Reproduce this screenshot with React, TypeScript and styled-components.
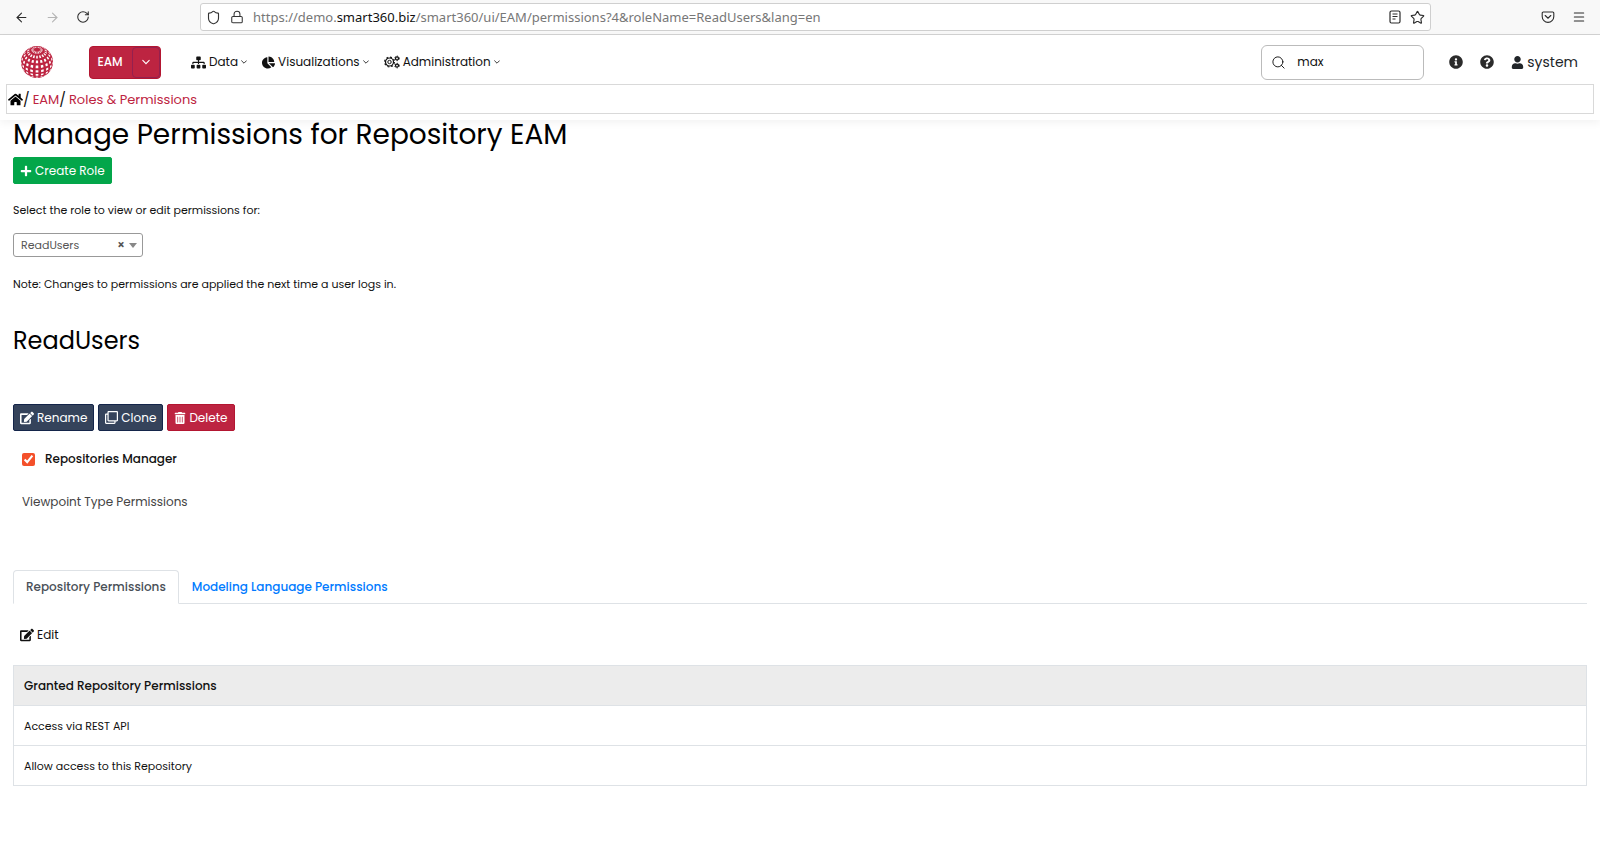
import React from "react";
import styled, { createGlobalStyle, css } from "styled-components";
import {
  FaSitemap,
  FaChartPie,
  FaHome,
  FaInfoCircle,
  FaQuestionCircle,
  FaUser,
  FaPlus,
  FaEdit,
  FaRegClone,
  FaTrashAlt,
} from "react-icons/fa";
import { ArrowLeft, ArrowRight, RotateCw, Shield, Lock, Star, Menu, Search } from "lucide-react";

const red = "#bd2441";
const navy = "#35435b";
const rule = "#dee2e6";

const GlobalStyle = createGlobalStyle`
  *, *::before, *::after { box-sizing: border-box; }
  body {
    margin: 0;
    background: #fff;
    color: #111;
    font-family: Poppins, Inter, "Open Sans", sans-serif;
    font-size: 12px;
    line-height: 20px;
  }
  button, input, select { font: inherit; color: inherit; }
  h1, h2, p { margin: 0; font-weight: 400; }
  svg { display: block; flex: none; }
`;

/* Browser toolbar */

const BrowserBar = styled.div`
  display: flex;
  align-items: center;
  height: 35px;
  padding: 0 14px;
  background: #f8f8f8;
  border-bottom: 1px solid #d2d2d2;
`;

const BarSide = styled.div<{ $right?: boolean }>`
  display: flex;
  align-items: center;
  flex: none;
  gap: ${(p) => (p.$right ? 17 : 16)}px;
  width: ${(p) => (p.$right ? 155 : 186)}px;
  justify-content: ${(p) => (p.$right ? "flex-end" : "flex-start")};
`;

const IconButton = styled.button<{ $faded?: boolean }>`
  display: flex;
  padding: 0;
  border: 0;
  background: none;
  color: ${(p) => (p.$faded ? "#b5b5b5" : "#2b2b2b")};
`;

const AddressBox = styled.div`
  display: flex;
  align-items: center;
  flex: 1;
  min-width: 0;
  height: 28px;
  padding: 0 5px;
  gap: 9px;
  background: #fff;
  border: 1px solid #cfcfcf;
  border-radius: 3px;
  color: #333;
`;

const Address = styled.div`
  flex: 1;
  min-width: 0;
  overflow: hidden;
  white-space: nowrap;
  font-family: "Noto Sans", sans-serif;
  font-size: 13px;
  color: #777;
  outline: 0;
`;

const Host = styled.span`
  color: #111;
`;

/* Application header */

const Header = styled.header`
  padding: 0 6px 6px;
  box-shadow: 0 3px 8px rgba(0, 0, 0, 0.05);
`;

const NavBar = styled.div`
  display: flex;
  align-items: center;
  height: 49px;
  padding: 5px 16px 0 14px;
`;

const RepoButton = styled.div`
  display: flex;
  height: 33px;
  margin: 0 30px 0 35px;
  background: ${red};
  border: 1px solid #b31631;
  border-radius: 4px;
  color: #fff;
`;

const RepoName = styled.button`
  width: 42px;
  padding: 0 2px 0 0;
  border: 0;
  background: none;
  font-weight: 500;
`;

const RepoCaret = styled.button`
  display: flex;
  align-items: center;
  justify-content: center;
  width: 28px;
  padding: 0;
  border: 1px solid #95204f;
  border-radius: 4px;
  background: none;
`;

const NavItem = styled.button`
  display: flex;
  align-items: center;
  gap: 3px;
  margin-right: 15px;
  padding: 0;
  border: 0;
  background: none;
  white-space: nowrap;
`;

const SearchBox = styled.label`
  display: flex;
  align-items: center;
  gap: 11px;
  width: 163px;
  height: 35px;
  margin: 0 25px 0 auto;
  padding: 0 9px;
  border: 1px solid #bbb;
  border-radius: 6px;
`;

const SearchInput = styled.input`
  flex: 1;
  min-width: 0;
  padding: 0;
  border: 0;
  outline: 0;
  background: none;
`;

const UserTools = styled.div`
  display: flex;
  align-items: center;
  gap: 17px;
`;

const UserLink = styled.a`
  display: flex;
  align-items: center;
  gap: 3px;
  color: #212529;
  font-size: 14px;
  text-decoration: none;
`;

const Breadcrumb = styled.nav`
  display: flex;
  align-items: center;
  height: 30px;
  padding: 1px 1px 0;
  border: 1px solid #d9d9d9;
  font-size: 13px;
`;

const Crumb = styled.a`
  color: ${red};
  text-decoration: none;
`;

const Slash = styled.span`
  margin-right: 3px;
  font-size: 14px;
`;

const CrumbHome = styled.a`
  display: flex;
  color: #000;
`;

/* Page */

const Main = styled.main`
  padding: 0 13px;
`;

const Title = styled.h1`
  padding-bottom: 7px;
  font-size: 28px;
  line-height: 30px;
  color: #000;
`;

const RoleTitle = styled.h2`
  padding: 31px 0 47px;
  font-size: 24px;
  line-height: 32px;
  color: #000;
`;

const ButtonRow = styled.div`
  display: flex;
  gap: 4px;
`;

const tones = { green: "#03a64a", navy, red };
const edges = { green: "#03a64a", navy: "#14254a", red: "#b31631" };

const Button = styled.button<{ $tone: keyof typeof tones }>`
  display: flex;
  align-items: center;
  gap: 3px;
  height: 27px;
  padding: 0 6px;
  border: 1px solid ${(p) => edges[p.$tone]};
  border-radius: 2px;
  background: ${(p) => tones[p.$tone]};
  color: #fff;
  white-space: nowrap;
`;

const RoleLabel = styled.label`
  display: block;
  padding: 16px 0 13px;
  font-size: 11px;
`;

const RolePicker = styled.div`
  display: flex;
  align-items: center;
  width: 130px;
  height: 24px;
  padding: 0 5px 0 7px;
  border: 1px solid #999;
  border-radius: 3px;
  color: #555;
`;

const RoleSelect = styled.select`
  flex: 1;
  min-width: 0;
  padding: 0;
  border: 0;
  outline: 0;
  appearance: none;
  background: none;
  font-size: 11px;
`;

const ClearButton = styled.button`
  padding: 0 4px;
  border: 0;
  background: none;
  font-weight: 600;
`;

const Caret = styled.span`
  border: 4px solid transparent;
  border-top: 5px solid #888;
  border-bottom: 0;
`;

const Note = styled.p`
  padding-top: 17px;
  font-size: 11px;
`;

const CheckLabel = styled.label`
  display: flex;
  align-items: center;
  gap: 10px;
  padding: 18px 9px 0;
  font-weight: 500;
`;

const Checkbox = styled.input`
  width: 13px;
  height: 13px;
  margin: 0;
  accent-color: #f4502a;
`;

const Subheading = styled.p`
  padding: 23px 9px 58px;
  color: #444;
`;

const Tabs = styled.div`
  display: flex;
  height: 34px;
  border-bottom: 1px solid ${rule};
`;

const Tab = styled.button<{ $active?: boolean }>`
  height: 34px;
  padding: 0 12px;
  border: 1px solid transparent;
  background: none;
  color: #007bff;
  font-weight: 500;
  white-space: nowrap;
  ${(p) =>
    p.$active &&
    css`
      border-color: ${rule} ${rule} #fff;
      border-radius: 4px 4px 0 0;
      background: #fff;
      color: #495057;
    `}
`;

const EditButton = styled.button`
  display: flex;
  align-items: center;
  gap: 3px;
  margin: 21px 0 20px;
  padding: 0 7px;
  border: 0;
  background: none;
`;

const Table = styled.table`
  width: 100%;
  border-collapse: collapse;
  border: 1px solid ${rule};
  text-align: left;

  th, td {
    height: 40px;
    padding: 0 10px;
    border-bottom: 1px solid ${rule};
  }
  th {
    background: #ececec;
    font-weight: 500;
  }
  td {
    font-size: 11px;
  }
`;

/* A cell of the globe, given by its middle latitude and longitude in degrees,
   projected on a sphere whose north pole leans towards the viewer. */
const tilt = (38 * Math.PI) / 180;

const project = (lat: number, lon: number) => {
  const a = (lat * Math.PI) / 180;
  const b = (lon * Math.PI) / 180;
  const x = Math.cos(a) * Math.sin(b);
  const y = Math.sin(a);
  const z = Math.cos(a) * Math.cos(b);
  return {
    x: 17 + 16 * x,
    y: 17 - 16 * (y * Math.cos(tilt) - z * Math.sin(tilt)),
    z: y * Math.sin(tilt) + z * Math.cos(tilt),
  };
};

const globeCells: string[] = [];
for (let lat = 74; lat >= -50; lat -= 18) {
  for (let lon = 0; lon < 360; lon += 20) {
    if (project(lat, lon).z < 0.1) continue;
    const corners = [
      [-5, -5],
      [-5, 5],
      [5, 5],
      [5, -5],
    ].map(([dLat, dLon]) => project(lat + dLat, lon + dLon));
    globeCells.push(corners.map((c) => `${c.x.toFixed(2)},${c.y.toFixed(2)}`).join(" "));
  }
}

const GlobeLogo = () => (
  <svg width="34" height="34" viewBox="0 0 34 34" role="img" aria-label="Home">
    <circle cx="17" cy="17" r="16" fill={red} />
    {globeCells.map((points) => (
      <polygon key={points} points={points} fill="#fff" />
    ))}
  </svg>
);

const Chevron = ({ size = 6 }: { size?: number }) => (
  <svg width={size} height={size} viewBox="0 0 8 8" fill="none" stroke="currentColor" strokeWidth="1.1" strokeLinecap="round">
    <path d="M.8 2.4 4 5.6l3.2-3.2" />
  </svg>
);

const ReaderIcon = () => (
  <svg width="12" height="14" viewBox="0 0 12 14" fill="none" stroke="currentColor">
    <rect x="1" y="1" width="10" height="12" rx="1.5" strokeWidth="1.2" />
    <path d="M3.5 4h5M3.5 6.5h5M3.5 9h3" />
  </svg>
);

const PocketIcon = () => (
  <svg width="14" height="14" viewBox="0 0 14 14" fill="none" stroke="currentColor" strokeWidth="1.1" strokeLinecap="round">
    <path d="M2.2 2h9.6a1 1 0 0 1 1 1v3.6a5.8 5.8 0 0 1-11.6 0V3a1 1 0 0 1 1-1z" />
    <path d="M4.2 5.5 7 8.2l2.8-2.7" />
  </svg>
);

const GearsIcon = () => (
  <svg width="16" height="14" viewBox="0 0 16 14" fill="none" stroke="currentColor">
    <circle cx="5.5" cy="7" r="4" strokeWidth="1.2" />
    <circle cx="5.5" cy="7" r="4.9" strokeWidth="1.1" strokeDasharray="1.9 1.95" />
    <circle cx="5.5" cy="7" r="1.7" strokeWidth="1" />
    <circle cx="13" cy="3.4" r="1.5" strokeWidth="1.3" />
    <circle cx="13" cy="3.4" r="2.3" strokeWidth=".9" strokeDasharray="1.2 1.2" />
    <circle cx="13" cy="10.6" r="1.5" strokeWidth="1.3" />
    <circle cx="13" cy="10.6" r="2.3" strokeWidth=".9" strokeDasharray="1.2 1.2" />
  </svg>
);

const granted = ["Access via REST API", "Allow access to this Repository"];

export default function App() {
  return (
    <>
      <GlobalStyle />
      <BrowserBar>
        <BarSide>
          <IconButton aria-label="Back"><ArrowLeft size={15} strokeWidth={1.7} /></IconButton>
          <IconButton aria-label="Forward" $faded><ArrowRight size={15} strokeWidth={1.7} /></IconButton>
          <IconButton aria-label="Reload"><RotateCw size={14} strokeWidth={1.8} /></IconButton>
        </BarSide>
        <AddressBox>
          <Shield size={15} strokeWidth={1.8} />
          <Lock size={14} strokeWidth={1.8} />
          <Address role="textbox" aria-label="Address" tabIndex={0}>
            https://demo.<Host>smart360.biz</Host>/smart360/ui/EAM/permissions?4&amp;roleName=ReadUsers&amp;lang=en
          </Address>
          <IconButton aria-label="Reader view"><ReaderIcon /></IconButton>
          <IconButton aria-label="Bookmark"><Star size={15} strokeWidth={1.8} /></IconButton>
        </AddressBox>
        <BarSide $right>
          <IconButton aria-label="Save to Pocket"><PocketIcon /></IconButton>
          <IconButton aria-label="Menu"><Menu size={14} strokeWidth={1.8} /></IconButton>
        </BarSide>
      </BrowserBar>

      <Header>
        <NavBar>
          <GlobeLogo />
          <RepoButton>
            <RepoName>EAM</RepoName>
            <RepoCaret aria-label="Choose repository"><Chevron size={8} /></RepoCaret>
          </RepoButton>
          <NavItem><FaSitemap size={15} />Data<Chevron /></NavItem>
          <NavItem><FaChartPie size={13} />Visualizations<Chevron /></NavItem>
          <NavItem><GearsIcon />Administration<Chevron /></NavItem>
          <SearchBox>
            <Search size={15} strokeWidth={1.5} />
            <SearchInput aria-label="Search" defaultValue="max" />
          </SearchBox>
          <UserTools>
            <IconButton aria-label="Information"><FaInfoCircle size={14} /></IconButton>
            <IconButton aria-label="Help"><FaQuestionCircle size={14} /></IconButton>
            <UserLink href="#user"><FaUser size={13} />system</UserLink>
          </UserTools>
        </NavBar>
        <Breadcrumb aria-label="Breadcrumb">
          <CrumbHome href="#home" aria-label="Home"><FaHome size={15} /></CrumbHome>
          <Slash>/</Slash>
          <Crumb href="#eam">EAM</Crumb>
          <Slash>/</Slash>
          <Crumb href="#roles">Roles &amp; Permissions</Crumb>
        </Breadcrumb>
      </Header>

      <Main>
        <Title>Manage Permissions for Repository EAM</Title>
        <ButtonRow>
          <Button $tone="green"><FaPlus size={12} />Create Role</Button>
        </ButtonRow>
        <RoleLabel htmlFor="role">Select the role to view or edit permissions for:</RoleLabel>
        <RolePicker>
          <RoleSelect id="role" defaultValue="ReadUsers">
            <option>ReadUsers</option>
          </RoleSelect>
          <ClearButton aria-label="Clear role">×</ClearButton>
          <Caret />
        </RolePicker>
        <Note>Note: Changes to permissions are applied the next time a user logs in.</Note>

        <RoleTitle>ReadUsers</RoleTitle>
        <ButtonRow>
          <Button $tone="navy"><FaEdit size={14} />Rename</Button>
          <Button $tone="navy"><FaRegClone size={13} />Clone</Button>
          <Button $tone="red"><FaTrashAlt size={12} />Delete</Button>
        </ButtonRow>
        <CheckLabel>
          <Checkbox type="checkbox" defaultChecked />
          Repositories Manager
        </CheckLabel>
        <Subheading>Viewpoint Type Permissions</Subheading>

        <Tabs role="tablist">
          <Tab role="tab" aria-selected $active>Repository Permissions</Tab>
          <Tab role="tab" aria-selected={false}>Modeling Language Permissions</Tab>
        </Tabs>
        <EditButton><FaEdit size={14} />Edit</EditButton>
        <Table>
          <thead>
            <tr><th scope="col">Granted Repository Permissions</th></tr>
          </thead>
          <tbody>
            {granted.map((name) => (
              <tr key={name}><td>{name}</td></tr>
            ))}
          </tbody>
        </Table>
      </Main>
    </>
  );
}
